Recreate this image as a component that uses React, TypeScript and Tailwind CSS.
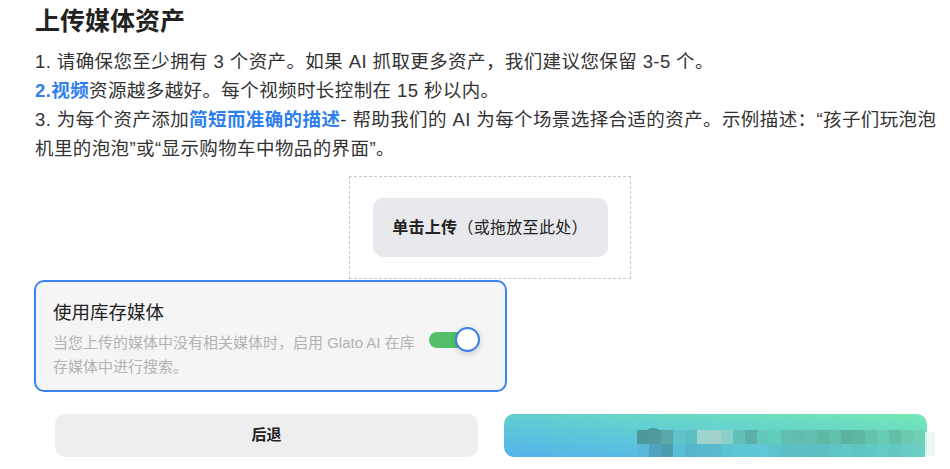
import React from 'react';

const mosaicTop = [
  '#4d9a9c', '#4f9b9d', '#5aa8a8', '#60c4cc', '#5ebfc0', '#9ed4d0', '#a6d2cc', '#8ccfc8',
  '#62c0b8', '#5cb0a8', '#62c8bc', '#62cdbd', '#60bfae', '#60bcac', '#62c0b0', '#5eb8a4',
  '#60c0ac', '#5cb4a0', '#5cb89f', '#62c4ac', '#68ccb4', '#62c0a8', '#6acbb0', '#70d0b6',
];

const mosaicBottom = [
  '#5ab8d8', '#4ea4c0', '#4a9eb0', '#5ac0d8', '#58b4cc', '#58b8cc', '#5cb8cc', '#5cc4d0',
  '#5cc8d4', '#5cc8d4', '#60c8d4', '#5cc4cc', '#5cbfc8', '#5cc0c8', '#5cbfc6', '#5cc0c4',
  '#5ec4c4', '#60c8c8', '#60c4c0', '#62c8c4', '#64ccc4', '#64c8c0', '#68ccc4', '#6ccfc6',
];

function Mosaic() {
  return (
    <svg width="300" height="36" viewBox="0 0 300 36" className="absolute left-[133px] top-[12px]">
      <ellipse cx="16" cy="8" rx="9" ry="6" fill="#4a8f90" opacity="0.8" />
      {mosaicTop.map((c, i) => (
        <rect key={'t' + i} x={i * 12} y="4" width="12" height="14" fill={c} />
      ))}
      {mosaicBottom.map((c, i) => (
        <rect key={'b' + i} x={i * 12} y="18" width="12" height="13" fill={c} />
      ))}
      <rect x="288" y="6" width="10" height="24" fill="#e6f7f2" opacity="0.8" />
    </svg>
  );
}

export default function App() {
  return (
    <div
      className="w-[950px] h-[469px] bg-white overflow-hidden pl-[35px] pr-[5px] pt-[4px] text-[#333333]"
      style={{ fontFamily: '"Liberation Sans", "Noto Sans CJK SC", sans-serif' }}
    >
      {/* Title */}
      <h1 className="text-[25px] leading-[34px] font-bold text-[#222222]">上传媒体资产</h1>

      {/* Instructions */}
      <div className="mt-[9px] text-[18.5px] leading-[29px] tracking-[0.4px] whitespace-nowrap">
        <p>1. 请确保您至少拥有 3 个资产。如果 AI 抓取更多资产，我们建议您保留 3-5 个。</p>
        <p>
          <span className="text-[#2f7ff0] font-bold">2.视频</span>资源越多越好。每个视频时长控制在 15 秒以内。
        </p>
        <p>
          3. 为每个资产添加<span className="text-[#2f7ff0] font-semibold">简短而准确的描述</span>- 帮助我们的 AI
          为每个场景选择合适的资产。示例描述：“孩子们玩泡泡
          <br />
          机里的泡泡”或“显示购物车中物品的界面”。
        </p>
      </div>

      {/* Upload area */}
      <div className="mt-[13px] flex justify-center">
        <div className="w-[282px] h-[103px] border border-dashed border-[#c8c8c8] flex items-center justify-center">
          <button className="w-[235px] h-[59px] rounded-[10px] bg-[#e8e9ec] text-[16px] tracking-[0.3px] text-[#222222]">
            <span className="font-bold">单击上传</span>（或拖放至此处）
          </button>
        </div>
      </div>

      {/* Stock media */}
      <div className="mt-[1px] -ml-[1px] w-[473px] h-[112px] rounded-[10px] border-2 border-[#3b82f6] bg-[#f5f5f5] pl-[17px] pr-[25px] pt-[18px] flex items-start justify-between">
        <div>
          <div className="text-[18.5px] leading-[26px] text-[#222222]">使用库存媒体</div>
          <p className="mt-[5px] w-[370px] text-[15px] leading-[24px] text-[#b3b3b3]">
            当您上传的媒体中没有相关媒体时，启用 Glato AI 在库存媒体中进行搜索。
          </p>
        </div>
        <div className="relative mt-[27px] w-[51px] h-[25px] flex items-center">
          <div className="w-[42px] h-[16px] rounded-full bg-[#52c068]" />
          <div className="absolute right-0 top-0 w-[25px] h-[25px] rounded-full bg-white border-2 border-[#3b7ff0] shadow-[0_2px_6px_rgba(0,0,0,0.18)]" />
        </div>
      </div>

      {/* Actions */}
      <div className="mt-[22px] ml-[20px] w-[872px] grid grid-cols-2 gap-[26px]">
        <button className="h-[43px] rounded-[10px] bg-[#eeeeee] text-[15px] font-bold text-[#222222]">后退</button>
        <div className="relative h-[43px] rounded-[10px] bg-gradient-to-tr from-[#55b2ec] to-[#74e8b2]">
          <Mosaic />
        </div>
      </div>
    </div>
  );
}
